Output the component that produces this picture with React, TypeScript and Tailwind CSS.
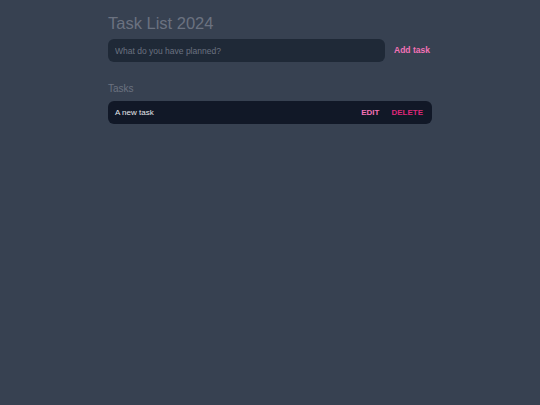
export default function App() {
  return (
    <div className="min-h-[405px] w-full bg-[#374151] font-['Liberation_Sans',Arial,sans-serif]">
      <div className="mx-auto w-[324px] pt-[13px]">
        <h1 className="text-[16.5px] leading-[20px] text-[#6b7280]">Task List 2024</h1>
        <div className="mt-[6px] flex items-center">
          <input
            className="h-[23px] w-[277px] rounded-md bg-[#1f2937] px-[7px] text-[8.5px] text-gray-200 placeholder:text-[#6b7280] outline-none"
            placeholder="What do you have planned?"
          />
          <button className="ml-[9px] text-[8.5px] font-bold text-[#f472b6]">Add task</button>
        </div>
        <h2 className="mt-[20px] text-[10px] leading-[14px] text-[#6b7280]">Tasks</h2>
        <div className="mt-[5px] flex h-[23px] items-center rounded-md bg-[#111827] pl-[7px] pr-[9px]">
          <span className="flex-1 text-[8px] text-gray-200">A new task</span>
          <button className="text-[8px] font-bold text-[#f472b6]">EDIT</button>
          <button className="ml-[12px] text-[8px] font-bold text-[#db2777]">DELETE</button>
        </div>
      </div>
    </div>
  );
}
